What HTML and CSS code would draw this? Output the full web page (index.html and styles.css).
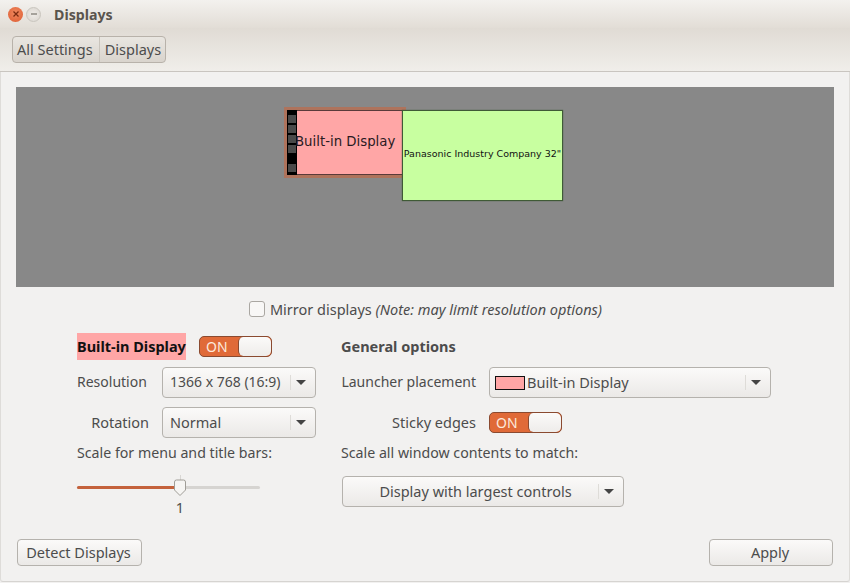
FILE: index.html
```html
<!DOCTYPE html>
<html lang="en">
<head>
<meta charset="utf-8">
<title>Displays</title>
<link rel="stylesheet" href="styles.css">
</head>
<body>
<div class="window">
  <header class="titlebar">
    <span class="wm close"><svg width="8" height="8" viewBox="0 0 8 8"><path d="M1.500 1.500l5 5M6.500 1.500l-5 5" stroke="#7a2a10" stroke-width="1.300"/></svg></span>
    <span class="wm min"><svg width="8" height="8" viewBox="0 0 8 8"><path d="M1 4h6" stroke="#77736c" stroke-width="1.200"/></svg></span>
    <span class="title">Displays</span>
  </header>
  <nav class="toolbar">
    <div class="crumbs"><span class="crumb">All Settings</span><span class="crumb">Displays</span></div>
  </nav>
  <main class="content">
    <section class="preview">
      <div class="mon mon-a">
        <div class="launcher"><i></i><i></i><i></i><i></i><b></b><i></i></div>
        <span class="mon-a-label">Built-in Display</span>
      </div>
      <div class="mon mon-b">Panasonic Industry Company 32"</div>
    </section>
    <div class="mirror">
      <span class="check"></span>
      <span>Mirror displays <em>(Note: may limit resolution options)</em></span>
    </div>
    <div class="columns">
      <section class="col col-left">
        <div class="row row-head">
          <strong class="swatch-label">Built-in Display</strong>
          <span class="switch"><span class="on">ON</span><span class="knob"></span></span>
        </div>
        <div class="row row-field">
          <span class="lbl lbl-narrow lbl-start">Resolution</span>
          <div class="select sel-left"><span class="val val-narrow">1366 x 768 (16:9)</span><span class="arrow"></span></div>
        </div>
        <div class="row row-field row-rot">
          <span class="lbl">Rotation</span>
          <div class="select sel-left"><span class="val">Normal</span><span class="arrow"></span></div>
        </div>
        <div class="plain">Scale for menu and title bars:</div>
        <div class="slider">
          <div class="track"><div class="fill"></div></div>
          <span class="tick"></span>
          <svg class="thumb" width="14" height="18" viewBox="0 0 14 18"><path d="M1.500 3a2 2 0 0 1 2-2h7a2 2 0 0 1 2 2v8l-5.500 5.500L1.500 11z" fill="#f6f5f3" stroke="#a09d97"/></svg>
        </div>
        <div class="slider-val">1</div>
      </section>
      <section class="col col-right">
        <div class="row row-head"><strong class="heading">General options</strong></div>
        <div class="row row-field">
          <span class="lbl lbl-r lbl-narrow">Launcher placement</span>
          <div class="select sel-wide"><span class="val val-swatch"><span class="mini"></span>Built-in Display</span><span class="arrow"></span></div>
        </div>
        <div class="row row-field row-rot">
          <span class="lbl lbl-r">Sticky edges</span>
          <span class="switch"><span class="on">ON</span><span class="knob"></span></span>
        </div>
        <div class="plain">Scale all window contents to match:</div>
        <div class="select sel-scale"><span class="val val-c">Display with largest controls</span><span class="arrow"></span></div>
      </section>
    </div>
    <footer class="actions">
      <button class="btn btn-detect">Detect Displays</button>
      <button class="btn btn-apply">Apply</button>
    </footer>
  </main>
</div>
</body>
</html>
```
FILE: styles.css
```css
* { box-sizing: border-box; }
html, body { margin: 0; height: 100%; }
body { font-family: "Noto Sans", "Open Sans", sans-serif; font-size: 14.5px; color: #4c4c4c; background: #f2f1f0; overflow: hidden; }
.window { width: 850px; height: 583px; display: flex; flex-direction: column; padding-bottom: 1px; }
.titlebar { height: 28px; flex: none; display: flex; align-items: center; padding-left: 8px; background: linear-gradient(#f3f1ee, #e2ddd6); }
.wm { width: 15px; height: 15px; border-radius: 50%; display: flex; align-items: center; justify-content: center; }
.close { background: radial-gradient(circle at 50% 40%, #f08a60, #dd5a30); }
.min { margin-left: 3px; background: radial-gradient(circle, #efece8, #d9d5cf); border: 1px solid #c9c5be; }
.title { margin-left: 13px; font-weight: 700; font-size: 14.2px; color: #5a544d; }
.toolbar { height: 44px; flex: none; padding: 8px 12px 0; background: linear-gradient(#e0dbd4, #f0eeea); border-bottom: 1px solid #c9c5c0; }
.crumbs { display: inline-flex; height: 27px; border: 1px solid #b8b2aa; border-radius: 4px; background: linear-gradient(#e9e6e1, #d9d4cd); }
.crumb { padding: 0 4px 0 5px; line-height: 25px; }
.crumb:first-child { padding: 0 6px 0 4px; }
.crumb + .crumb { border-left: 1px solid #c9c4bc; }
.content { flex: 1; display: flex; flex-direction: column; padding: 15px 16px 0; border-left: 1px solid #dedcd9; border-right: 1px solid #dedcd9; border-bottom: 1px solid #d6d4d1; border-radius: 0 0 3px 3px; }
.preview { position: relative; height: 200px; margin-left: -1px; margin-right: -1px; background: #888; flex: none; }
.mon { position: absolute; color: #111; }
.mon-a { left: 271px; top: 23px; width: 116px; height: 65px; background: #ffa6a6; border: 1px solid #5a3a3a; box-shadow: 0 0 0 3px rgba(221, 90, 40, .45); display: flex; align-items: center; }
.launcher { width: 10px; margin: -1px 0 -1px -1px; height: 65px; background: #000; display: flex; flex-direction: column; gap: 2px; padding: 5px 1px 0; flex: none; }
.launcher i { height: 8px; background: #4a4a4a; display: block; flex: none; }
.launcher b { height: 7px; background: #000; display: block; flex: none; }
.mon-a-label { font-family: "DejaVu Sans", sans-serif; font-size: 13.300px; white-space: nowrap; margin-left: -2px; padding-bottom: 3px; color: #2a1a22; }
.mon-b { left: 386px; top: 23px; width: 161px; height: 91px; padding-bottom: 4px; background: #c8ffa0; border: 1px solid #3f5a36; box-shadow: 0 0 1px #3f5a36; font-family: "DejaVu Sans", sans-serif; font-size: 9.500px; display: flex; align-items: center; justify-content: center; white-space: nowrap; }
.mirror { height: 44px; flex: none; display: flex; align-items: center; justify-content: center; gap: 5px; padding-left: 1px; }
.check { width: 16px; height: 16px; border: 1px solid #aaa7a2; border-radius: 3px; background: #f8f7f6; }
.columns { display: flex; padding-left: 60px; }
.col-left { width: 264px; }
.col-right { flex: 1; }
.row { display: flex; align-items: center; }
.row-head { height: 27px; margin-top: 2px; }
.swatch-label { background: #ffa6a6; color: #111; height: 27px; line-height: 27px; width: 109px; white-space: nowrap; }
.switch { margin-left: 13px; width: 73px; height: 21px; border: 1px solid #8a4a30; border-radius: 5px; display: flex; overflow: hidden; background: #e06a38; }
.on { width: 38px; color: #fde9dc; line-height: 19px; padding-left: 6px; font-size: 14px; }
.knob { flex: 1; border: 1px solid #8a4a30; border-width: 0 0 0 1px; border-radius: 5px; background: linear-gradient(#fbfaf9, #eeecea); }
.row-field { height: 31px; margin-top: 7px; }
.row-rot { margin-top: 9px; }
.lbl { width: 72px; text-align: right; margin-right: 13px; padding-bottom: 2px; white-space: nowrap; }
.lbl-start { text-align: left; }
.lbl-narrow { font-size: 14px; }
.lbl-r { width: 135px; }
.col-right .switch { margin-left: 0; }
.select { display: flex; align-items: center; height: 31px; border: 1px solid #b5b2ad; border-radius: 4px; background: linear-gradient(#fbfaf9, #ebe9e7); }
.val { flex: 1; padding: 0 0 2px 7px; white-space: nowrap; display: flex; align-items: center; }
.val-narrow { font-size: 14px; }
.val-swatch { padding-left: 5px; }
.val-c { justify-content: center; padding-left: 10px; }
.arrow { width: 25px; height: 15px; border-left: 1px solid #dedcd8; position: relative; flex: none; }
.arrow::after { content: ""; position: absolute; left: 5px; top: 5px; border: 5px solid transparent; border-top: 5px solid #444; border-bottom: 0; }
.sel-left { width: 154px; }
.sel-wide { width: 282px; }
.sel-scale { width: 282px; margin: 13px 0 0 1px; }
.mini { width: 30px; height: 14px; background: #ffa6a6; border: 1px solid #111; margin: 2px 2px 0 0; }
.plain { margin-top: 5px; height: 20px; line-height: 20px; white-space: nowrap; font-size: 14.200px; }
.heading { color: #4c4c4c; padding-bottom: 2px; }
.slider { position: relative; width: 183px; height: 32px; margin-top: 13px; }
.track { position: absolute; left: 0; right: 0; top: 10px; height: 3px; border-radius: 2px; background: #d6d4d1; }
.fill { width: 100px; height: 3px; border-radius: 2px; background: #c4623c; }
.tick { position: absolute; left: 103px; top: -1px; width: 1px; height: 8px; background: #d8d6d3; }
.thumb { position: absolute; left: 96px; top: 3px; }
.slider-val { width: 183px; text-align: center; margin-top: -11px; line-height: 20px; padding-left: 23px; }
.actions { display: flex; justify-content: space-between; margin-top: auto; margin-bottom: 15px; }
.btn { height: 27px; font: inherit; color: inherit; border: 1px solid #b5b2ad; border-radius: 4px; background: linear-gradient(#fbfaf9, #ebe9e7); padding: 0 2px 2px 0; }
.btn-detect { width: 125px; }
.btn-apply { width: 124px; }
```
